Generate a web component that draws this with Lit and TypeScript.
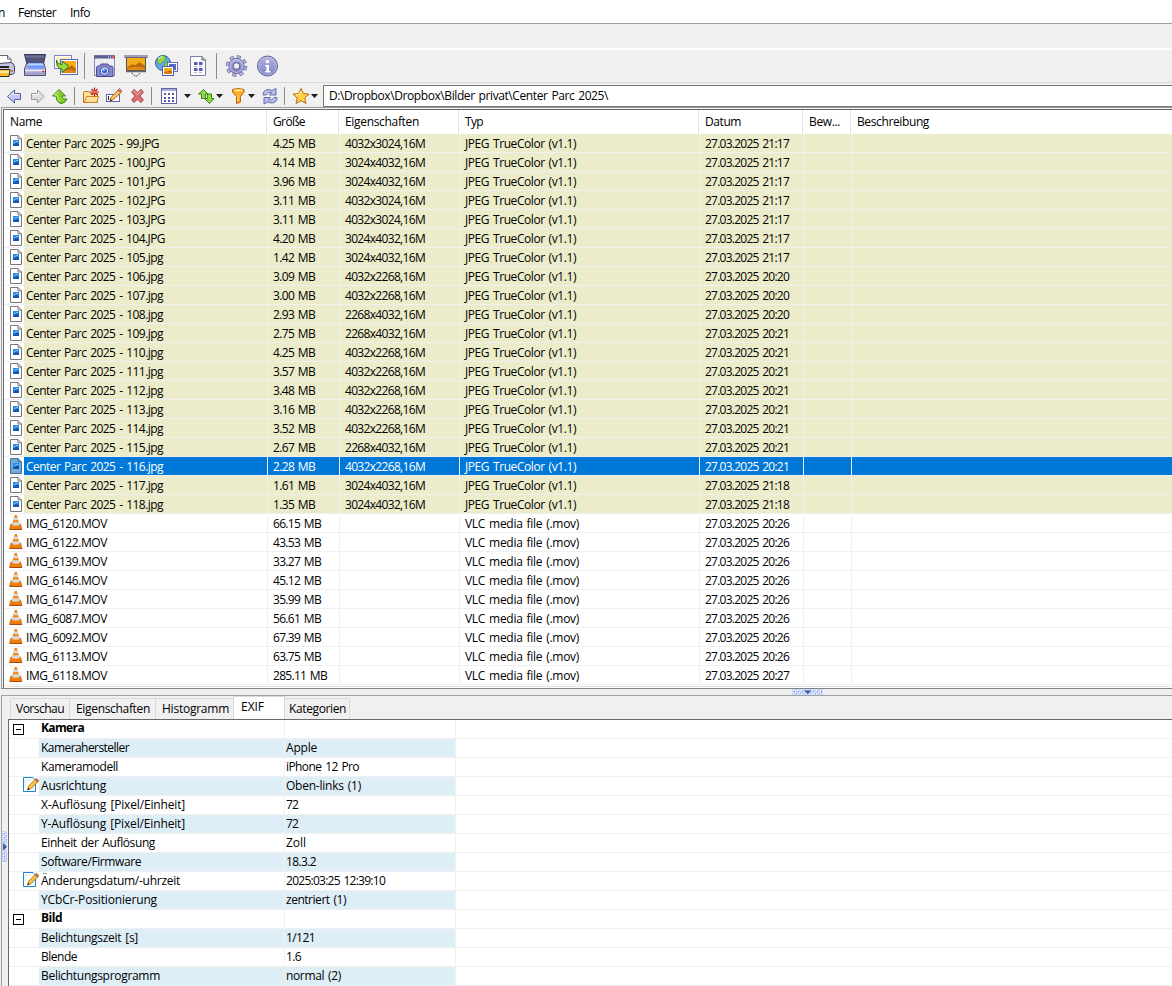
import { LitElement, html, svg, css } from "lit";
import { customElement } from "lit/decorators.js";
import { styleMap } from "lit/directives/style-map.js";

const FAMILY = '"Open Sans", "Noto Sans", sans-serif';
const WORD_GAP = 1.2;
const ctx = document.createElement("canvas").getContext("2d")!;

// Text whose tracking is derived from the width it should occupy.
const fit = (text: string, width: number, bold = false) => {
  ctx.font = `${bold ? 700 : 400} 12px ${FAMILY}`;
  const spaces = text.split(" ").length - 1;
  const gap = (width - ctx.measureText(text).width - spaces * WORD_GAP) / text.length;
  return html`<span style=${styleMap({ letterSpacing: gap.toFixed(3) + "px" })}>${text}</span>`;
};

// [number, extension, size, dimensions, time]
const photos: [number, string, string, string, string][] = [
  [99, "JPG", "4.25", "4032x3024", "21:17"],
  [100, "JPG", "4.14", "3024x4032", "21:17"],
  [101, "JPG", "3.96", "3024x4032", "21:17"],
  [102, "JPG", "3.11", "4032x3024", "21:17"],
  [103, "JPG", "3.11", "4032x3024", "21:17"],
  [104, "JPG", "4.20", "3024x4032", "21:17"],
  [105, "jpg", "1.42", "3024x4032", "21:17"],
  [106, "jpg", "3.09", "4032x2268", "20:20"],
  [107, "jpg", "3.00", "4032x2268", "20:20"],
  [108, "jpg", "2.93", "2268x4032", "20:20"],
  [109, "jpg", "2.75", "2268x4032", "20:21"],
  [110, "jpg", "4.25", "4032x2268", "20:21"],
  [111, "jpg", "3.57", "4032x2268", "20:21"],
  [112, "jpg", "3.48", "4032x2268", "20:21"],
  [113, "jpg", "3.16", "4032x2268", "20:21"],
  [114, "jpg", "3.52", "4032x2268", "20:21"],
  [115, "jpg", "2.67", "2268x4032", "20:21"],
  [116, "jpg", "2.28", "4032x2268", "20:21"],
  [117, "jpg", "1.61", "3024x4032", "21:18"],
  [118, "jpg", "1.35", "3024x4032", "21:18"],
];
const movies: [string, string, string][] = [
  ["6120", "66.15", "20:26"],
  ["6122", "43.53", "20:26"],
  ["6139", "33.27", "20:26"],
  ["6146", "45.12", "20:26"],
  ["6147", "35.99", "20:26"],
  ["6087", "56.61", "20:26"],
  ["6092", "67.39", "20:26"],
  ["6113", "63.75", "20:26"],
  ["6118", "285.11", "20:27"],
];
const SELECTED = 116;

const headers: [string, number][] = [
  ["Name", 32], ["Größe", 32], ["Eigenschaften", 74], ["Typ", 18],
  ["Datum", 36], ["Bew...", 31], ["Beschreibung", 72],
];
const tabs: [string, number][] = [
  ["Vorschau", 48], ["Eigenschaften", 74], ["Histogramm", 67], ["EXIF", 23], ["Kategorien", 57],
];

// kind: g = group heading, e = editable entry, blank = plain entry
const exif: [string, string, number, string, number][] = [
  ["g", "Kamera", 43, "", 0],
  ["", "Kamerahersteller", 88, "Apple", 31],
  ["", "Kameramodell", 77, "iPhone 12 Pro", 73],
  ["e", "Ausrichtung", 65, "Oben-links (1)", 75],
  ["", "X-Auflösung [Pixel/Einheit]", 144, "72", 12],
  ["", "Y-Auflösung [Pixel/Einheit]", 144, "72", 12],
  ["", "Einheit der Auflösung", 114, "Zoll", 20],
  ["", "Software/Firmware", 100, "18.3.2", 30],
  ["e", "Änderungsdatum/-uhrzeit", 139, "2025:03:25 12:39:10", 99],
  ["", "YCbCr-Positionierung", 116, "zentriert (1)", 60],
  ["g", "Bild", 21, "", 0],
  ["", "Belichtungszeit [s]", 97, "1/121", 29],
  ["", "Blende", 36, "1.6", 15],
  ["", "Belichtungsprogramm", 119, "normal (2)", 55],
];

// Each glyph is drawn in toolbar coordinates; [x, width, drawing].
const sep = (x: number, a: number, b: number) => svg`<path d="M${x}.5 ${a}V${b}" stroke="#8c8c8c"/>`;
const caret = (x: number, y = 94) => svg`<path d="M${x} ${y}h7l-3.5 4z" fill="#1a1a1a"/>`;
const hills = (x: number, y: number, w: number, h: number) => svg`
  <rect x=${x} y=${y} width=${w} height=${h} fill="#f3ad17"/>
  <path d="M${x} ${y + h * 0.75}l${w * 0.3} ${-h * 0.22} ${w * 0.13} ${h * 0.08} ${w * 0.27} ${-h * 0.25} ${w * 0.3} ${h * 0.28}v${h * 0.36}H${x}z" fill="#b9680c"/>
  <path d="M${x} ${y + h * 0.82}q${w * 0.5} ${-h * 0.2} ${w} 0v${h * 0.18}H${x}z" fill="#dc8a12"/>`;

const bigIcons: [number, number, unknown][] = [
  [0, 20, svg`
    <path d="M-8 66L-4 55.5H7.5L11 59V66z" fill="#fff" stroke="#66667c"/><path d="M7.5 55.5V59H11" fill="#ddd" stroke="#66667c"/>
    <path d="M-9 66Q-9 64-6 64L11 62.5Q14.5 63.5 14.5 67V72.5Q14 74.5 11 74.5H-9z" fill="#c5c5dd" stroke="#454562"/>
    <path d="M-8 67H9" stroke="#222" stroke-width="2"/><path d="M-2 69.5H10L9 76.5H-2z" fill="#ffb92c" stroke="#292929"/><path d="M-2 72H9" stroke="#ffe79a" stroke-width="2"/>
    <path d="M11 71h2" stroke="#d02020"/>`],
  [20, 30, svg`
    <path d="M24.500 54.500H45.500L43.500 64H27z" fill="#51557a" stroke="#34385b"/><path d="M26 56.500H44" stroke="#6e7296" stroke-width="2"/>
    <path d="M26.500 63.500H44L45.500 69V75.500H24.500V69z" fill="#b8b9d9" stroke="#4b4d79"/><path d="M28 63H43L44 68.500H27z" fill="#6996ff"/><path d="M28 64.500H43" stroke="#b5d7ff" stroke-width="2"/>
    <path d="M25 70.500H45" stroke="#eff0ff"/><path d="M25 73.500H45" stroke="#9a9cc2" stroke-width="2"/><path d="M42 71.500h2.500" stroke="#e22" stroke-width="1.3"/>`],
  [50, 30, svg`
    <rect x="54.500" y="55.500" width="17" height="13" fill="#fff" stroke="#7a86cc"/><rect x="56" y="57" width="14" height="10" fill="#fdeec2"/>
    <rect x="60.500" y="59.500" width="17" height="15" fill="#fff" stroke="#5d69b8"/>${hills(62, 61, 14, 12)}
    <path d="M56.500 60Q57.500 64.500 62 64.500V61L69 66.500 62 72.500V69Q56 68.500 56.500 60z" fill="#9bdc3a" stroke="#2d7612"/>`],
  [80, 10, sep(84, 53, 79)],
  [90, 30, svg`
    <rect x="94.500" y="55.500" width="20" height="20" fill="#eeeef4" stroke="#8a8bb0"/><path d="M94 57H115" stroke="#5e5f91" stroke-width="3"/><path d="M108 57h1m1 0h1" stroke="#fff"/><path d="M112 57h2" stroke="#e55" stroke-width="2"/>
    <path d="M96.500 67.500Q96.500 66 98.500 66L100 66 101 64h7l1 2h2q2 0 2 2v8.500H96.500z" fill="#8687cd" stroke="#484a93"/>
    <circle cx="104.500" cy="71" r="4.300" fill="#d9deff" stroke="#4a4c99"/><circle cx="104.500" cy="71" r="2.500" fill="#3a64d8"/><circle cx="103.800" cy="70" r="1" fill="#8fe8ff"/>`],
  [120, 32, svg`
    <rect x="124.500" y="55" width="23" height="3" fill="#686a85"/><path d="M125 56h22" stroke="#d5d5e2"/><rect x="126" y="58" width="20" height="13" fill="#555"/>${hills(127, 58, 18, 12)}
    <path d="M126 71.500h20" stroke="#666" stroke-width="1.500"/><path d="M131.500 73l4.500 3.500 4.500-3.500" fill="none" stroke="#444" stroke-dasharray="2 1"/>`],
  [152, 32, svg`
    <circle cx="163" cy="63" r="7.500" fill="#64a7ef" stroke="#29619e"/><path d="M157 61q3-6 8-5l1 4-4 2-2 3zM167 61l3 3-4 6-3-3z" fill="#9bd642" stroke="#388630" stroke-width=".5"/><path d="M158 59q2-3 5-2" stroke="#e5faff" fill="none"/>
    <rect x="167.500" y="62.500" width="10" height="9" fill="#fff" stroke="#6470c2"/><rect x="169" y="64" width="7" height="6" fill="#536bc7"/>
    <rect x="162.500" y="66.500" width="11" height="9" fill="#fff" stroke="#4f5eb0"/>${hills(164, 68, 8, 6)}`],
  [184, 28, svg`
    <path d="M190.500 56.500H202L205.500 60V75.500H190.500z" fill="#fafaff" stroke="#8182a2"/><path d="M202 56.500V60h3.500" fill="#bbb" stroke="#666"/>
    <path d="M194 62h3.500v3H194zm5 0h3.500v3H199zM194 68h3.500v3H194zm5 0h3.500v3H199z" fill="#5759b4"/><path d="M194 66.500h3m2 0h3M194 72.500h3m2 0h3" stroke="#aaa" stroke-width=".8"/>`],
  [212, 10, sep(216, 53, 79)],
  [222, 30, svg`
    <circle cx="236.500" cy="66" r="9" fill="none" stroke="#686a9f" stroke-width="3.500" stroke-dasharray="4 3.070"/>
    <circle cx="236.500" cy="66" r="9" fill="none" stroke="#b9bbe2" stroke-width="2.200" stroke-dasharray="2.800 4.270" stroke-dashoffset="-.6"/>
    <circle cx="236.500" cy="66" r="7.700" fill="url(#violet)" stroke="#686aa8" stroke-width=".9"/><circle cx="236.500" cy="66" r="6.500" stroke="#cfd0ee" stroke-width=".7"/><circle cx="236.500" cy="66" r="3.300" fill="#eee" stroke="#686aa8" stroke-width="1.300"/>`],
  [252, 30, svg`
    <circle cx="267.500" cy="66" r="10" fill="url(#violet)" stroke="#5c5e98"/><circle cx="267.500" cy="66" r="8.800" fill="none" stroke="#c9caed" stroke-width=".7"/>
    <circle cx="267.500" cy="61.500" r="1.700" fill="#fff"/><path d="M265 65h4v6h1.500v1.500H265V71h1.500v-4.500H265z" fill="#fff"/>`],
];

const smallIcons: [number, number, unknown][] = [
  [0, 26, svg`<path d="M7.500 96.500L14.500 90V93.500H20.500V99.500H14.500V103z" fill="#c3c8f5" stroke="#565cae"/><path d="M9 96.500l4.500-4V94.500h6" fill="none" stroke="#edf0ff"/>`],
  [26, 23, svg`<path d="M44 96.500L37.500 90V93.500H31.500V99.500H37.500V103z" fill="#dedede" stroke="#999"/><path d="M32.500 94.500H38.500V92.500" fill="none" stroke="#fff"/>`],
  [49, 22, svg`<path d="M59 89.500L65.500 96H62Q62 99.500 67 99Q65 103.500 61 103.500Q56.500 102.500 56 96H52.500z" fill="#84cf28" stroke="#3b7f18"/><path d="M59 91l-4.500 4H57q.5 4.500 3 6" fill="none" stroke="#cdf48c"/>`],
  [71, 8, sep(74, 87, 105)],
  [79, 24, svg`<path d="M83.500 92.500Q83.500 91.500 84.500 91.500H89L90.500 93.500H97.500V102.500H83.500z" fill="#ffe198" stroke="#b87821"/><path d="M84 102.500L86.500 96.500H98.500L97 102.500z" fill="#ffdc92" stroke="#b87821" stroke-width=".8"/><path d="M94.500 87.500v9M90 92h9M91.500 89l6 6M97.500 89l-6 6" stroke="#c51b18" stroke-width="1.200"/><circle cx="94.500" cy="92" r="1.200" fill="#ff9a86"/>`],
  [103, 23, svg`<rect x="106.500" y="94.500" width="13" height="7" fill="#fff" stroke="#6060b0"/><path d="M108.500 96v4" stroke="#222"/><path d="M110 101l1-3.500 7-7.500 3 2.500-7.500 7z" fill="#ffc455" stroke="#8e5113" stroke-width=".8"/><path d="M118 90l1.500-1.500 2.500 2.500-1 1.500z" fill="#e88b8b" stroke="#9f3f3f" stroke-width=".7"/><path d="M110 101l.6-2 1.500 1.200z" fill="#222"/>`],
  [126, 22, svg`<path d="M131.500 92l2.700-2.500 3.300 3.300L140.800 89.500l2.700 2.500-3.500 4 3.500 4-2.700 2.500-3.300-3.300-3.300 3.300-2.700-2.500 3.500-4z" fill="#dd7070" stroke="#a34848"/><path d="M133 92.500l1.200-1.300 3.300 3.300 3.300-3.300" stroke="#f7b0aa" fill="none"/>`],
  [148, 7, sep(151, 87, 105)],
  [155, 26, svg`<rect x="161.500" y="88.500" width="15" height="15" fill="#fff" stroke="#6364a3"/><path d="M162 90h14" stroke="#a9aade" stroke-width="2"/><path d="M164 94h2m2 0h2m2 0h2M164 98h2m2 0h2m2 0h2M164 101h2m2 0h2m2 0h2" stroke="#5557a8" stroke-width="1.800"/>`],
  [181, 13, caret(184)],
  [194, 21, svg`<path d="M203.500 89.500L208 94H205.500V98.500H201.500V94H198.500z" fill="#8fd83d" stroke="#3a8420"/><path d="M209.500 103.500L214 98.500H211.500V94H207.500V98.500H204.500z" fill="#8fd83d" stroke="#3a8420"/>`],
  [215, 12, caret(216)],
  [227, 20, svg`<path d="M232.500 89.500Q238 87.500 244 89.500V92L240.500 96.500V102L236.500 103.500V96.500L232.500 92z" fill="#ffad25" stroke="#bd620c"/><ellipse cx="238.300" cy="90.300" rx="4.500" ry="1.100" fill="#ffe789"/><path d="M237.800 95v6" stroke="#ffdc7b"/>`],
  [247, 12, caret(248)],
  [259, 22, svg`<path d="M263 95Q263 89.500 269 89.500L272 90.500 276 88.500V95H269.500L271.500 92.500Q268 91.500 266 95z" fill="#b9bdec" stroke="#5b60a8" stroke-width=".9"/><path d="M277 97.500Q277 103 271 103L268 102 264 104V97.500H270.500L268.500 100Q272 101 274 97.500z" fill="#b9bdec" stroke="#5b60a8" stroke-width=".9"/>`],
  [281, 8, sep(284, 87, 105)],
  [289, 21, svg`<path d="M301 88.500l2.300 5 5.700.6-4.200 3.800 1.200 5.600-5-2.900-5 2.900 1.200-5.600-4.200-3.800 5.700-.6z" fill="#ffcf3c" stroke="#b87019"/><path d="M301 91l-1.500 3.500-3.500.4" fill="none" stroke="#fff0a1" stroke-width="1.200"/>`],
  [310, 13, caret(311)],
];

const defs = svg`<defs>
  <linearGradient id="violet" x1="0" y1="0" x2="0" y2="1"><stop offset="0" stop-color="#b2b4e1"/><stop offset="1" stop-color="#7f81c2"/></linearGradient></defs>`;

const strip = (icons: [number, number, unknown][], y: number, h: number) =>
  icons.map(([x, w, art]) => html`<svg class="ico" width=${w} height=${h} viewBox="${x} ${y} ${w} ${h}" fill="none">${defs}${art}</svg>`);

const photoIcon = (on: boolean) => html`<svg class="ico" width="20" height="18" viewBox="4 134 20 18" fill="none">
  <path d="M10.500 135.500H18L21.500 139V150.500H10.500z" fill=${on ? "#72add8" : "#fff"} stroke=${on ? "#416e96" : "#777"}/>
  <path d="M18 135.500V139h3.500" stroke=${on ? "#416e96" : "#777"}/>
  <rect x="13" y="140" width="6" height="6" fill="#2b8ae6"/><path d="M13 146v-1.500l2-2 1.500 1 1-1 1.500 1.500v2z" fill=${on ? "#0b4fa9" : "#1554b5"}/><path d="M14 143.500L17 141l1 1" stroke="#70c7fa"/></svg>`;

const cone = () => html`<svg class="ico" width="20" height="18" viewBox="4 515 20 18" fill="none">
  <path d="M11 525h9.500l1.500 5.500H9.500z" fill="#ef7b0b" stroke="#cb5c08" stroke-width=".7"/>
  <path d="M14.800 516h2L20 527q-4 2.200-8.500 0z" fill="#f47e0a"/>
  <path d="M14.100 518.500h3.400l.9 2.800h-5.200zM12.600 523.200h6.400l.8 2.800q-4 1.500-8 0z" fill="#d9d9d9"/>
  <path d="M10 530.500h12" stroke="#a94a09"/></svg>`;

const editIcon = html`<svg class="ico" width="17" height="18" viewBox="22 777 17 18" fill="none">
  <path d="M23.500 777.500H33L35.500 780V791.500H23.500z" fill="#fff" stroke="#1e83d1"/><path d="M25 786v-6h6" stroke="#e2e2e2"/>
  <path d="M27.500 790l1.200-4 6.500-6.500 2.500 2.500-6.500 6.500z" fill="#ffc343" stroke="#8d5a13" stroke-width=".8"/>
  <path d="M35.200 779.500l1.300-1.300 2.400 2.500-1.200 1.300z" fill="#e36a57" stroke="#8d3a23" stroke-width=".6"/><path d="M27.500 790l.6-2 1.500 1.300z" fill="#222"/></svg>`;

const boxIcon = html`<svg class="ico" width="30" height="18" viewBox="9 720 30 18" fill="none"><rect x="13.500" y="724.500" width="10" height="10" fill="#fff" stroke="#000"/><path d="M16 729.500h5" stroke="#000"/></svg>`;

@customElement("app-root")
export class AppRoot extends LitElement {
  static styles = css`
    :host { display: flex; flex-direction: column; width: 1172px; height: 986px; overflow: hidden; background: #f0f0f0; color: #000;
      font: 12px/18px "Open Sans", "Noto Sans", sans-serif; word-spacing: 1.2px; white-space: nowrap; box-sizing: border-box; }
    * { box-sizing: border-box; }
    .ico { display: block; flex: none; }
    .menu { flex: none; height: 24px; background: #fff; border-bottom: 1px solid #a0a0a0; display: flex; padding-top: 4px; }
    .menu div { flex: none; }
    .m0 { width: 18px; display: flex; padding-right: 13px; justify-content: flex-end; overflow: hidden; }
    .m1 { width: 52px; }
    .band { flex: none; height: 26px; border-bottom: 2px solid #fff; }
    .bar { flex: none; display: flex; height: 32px; }
    .bar2 { flex: none; display: flex; height: 25px; border-top: 1px solid #d9d9d9; }
    .path { flex: 1; margin-top: 2px; height: 22px; background: #fff; border: 1px solid #777; border-right: 0; padding: 1px 0 0 5px; }
    .list { flex: none; height: 582px; margin-left: 1px; border: 1px solid #9a9aa0; border-right: 0; border-bottom-color: #828287; padding: 1px 0 0 1px; }
    .inner { height: 100%; border: 2px solid #696969; border-width: 1px 0 0 1px; background: #fff; }
    .head { display: grid; height: 24px; grid-template-columns: 263px 72px 120px 240px 104px 48px 1fr; }
    .head div { border-right: 1px solid #e2e2e2; padding: 3px 0 0 6px; }
    .head div:last-child { border: 0; }
    .row { display: grid; height: 19px; grid-template-columns: 20px 244px 72px 120px 240px 104px 48px 1fr; border-bottom: 1px solid #f0f0f0; }
    .cell { border-right: 1px solid #f0f0f0; padding-left: 5px; height: 18px; line-height: 20px; }
    .cell.name { padding-left: 2px; }
    .cell:last-child { border: 0; }
    .photo .cell { background: #ececca; }
    .row.sel .cell { background: #0078d7; color: #fff; }
    .rest { height: 2px; border-bottom: 1px solid #e3e3e3; }
    .split { flex: none; height: 6px; padding-left: 792px; }
    .lower { flex: 1; min-height: 0; margin-left: 1px; border: 1px solid #a0a0a0; border-width: 1px 0 0 1px; display: flex; }
    .side { flex: none; width: 6px; padding-top: 135px; }
    .pane { flex: 1; display: flex; flex-direction: column; min-width: 0; }
    .tabs { flex: none; height: 23px; display: flex; align-items: flex-end; padding-left: 2px; }
    .tab { height: 21px; border: 1px solid #d9d9d9; border-width: 1px 1px 0 0; padding: 1px 0 0 6px; flex: none; }
    .t0 { width: 60px; border-left-width: 1px; padding-left: 5px; } .t1 { width: 86px; } .t2 { width: 77px; border-right: 0; }
    .t3 { width: 52px; height: 23px; background: #fff; padding-left: 7px; border-left-width: 1px; }
    .t4 { width: 65px; padding-left: 4px; }
    .props { flex: 1; min-height: 0; background: #fff; border: 1px solid #696969; border-width: 1px 0 0 1px; overflow: hidden; }
    .prop { display: grid; grid-template-columns: 30px 246px 171px 1fr; height: 19px; border-bottom: 1px solid #f0f0f0; }
    .prop > div { height: 18px; padding-left: 2px; border-right: 1px solid #f0f0f0; }
    .prop > .value { padding-left: 1px; }
    .prop > .lead, .prop > div:last-child { border: 0; }
    .prop > .lead { padding-left: 13px; }
    .prop > .lead.group { padding-left: 0; }
    .prop.tint > .tone { background: #deeef7; }
    .prop .bold { font-weight: 700; line-height: 16px; }
  `;

  render() {
    const row = (cls: string, icon: unknown, cells: unknown[]) => html`<div class="row ${cls}">${icon}${cells.map(
      (c, i) => html`<div class="cell ${i ? "" : "name"}">${c}</div>`)}</div>`;
    return html`
      <div class="menu"><div class="m0">${fit("n", 7)}</div><div class="m1">${fit("Fenster", 38)}</div><div>${fit("Info", 20)}</div></div>
      <div class="band"></div>
      <div class="bar">${strip(bigIcons, 50, 32)}</div>
      <div class="bar2">${strip(smallIcons, 83, 24)}<div class="path">${fit("D:\\Dropbox\\Dropbox\\Bilder privat\\Center Parc 2025\\", 279)}</div></div>
      <div class="list"><div class="inner">
        <div class="head">${headers.map(([t, w]) => html`<div>${fit(t, w)}</div>`)}</div>
        ${photos.map(([n, ext, size, dim, time]) => row(n === SELECTED ? "photo sel" : "photo", photoIcon(n === SELECTED), [
          fit(`Center Parc 2025 - ${n}.${ext}`, (n < 100 ? 131 : 137) + (ext === "JPG" ? 2 : 0)),
          fit(`${size} MB`, 42), fit(`${dim},16M`, 80), fit("JPEG TrueColor (v1.1)", 111), fit(`27.03.2025 ${time}`, 84), "", ""]))}
        ${movies.map(([n, size, time]) => row("", cone(), [
          fit(`IMG_${n}.MOV`, 81), fit(`${size} MB`, size.length > 5 ? 54 : 48), "", fit("VLC media file (.mov)", 114), fit(`27.03.2025 ${time}`, 84), "", ""]))}
        <div class="rest"></div>
      </div></div>
      <div class="split"><svg class="ico" width="31" height="6" viewBox="0 0 31 6"><rect width="31" height="6" fill="#c7d7fb"/>
        <path d="M1 1.500h10M20 1.500h10M3 3.500h8M22 3.500h8M1 5h10M20 5h10" stroke="#fff" stroke-dasharray="1 3"/><path d="M2 2.500h9M21 2.500h9M4 4.500h7M23 4.500h7" stroke="#8d9bc8" stroke-dasharray="1 3"/><path d="M12 1.500h7.500l-3.700 3.500z" fill="#3f5a99"/></svg></div>
      <div class="lower">
        <div class="side"><svg class="ico" width="5" height="31" viewBox="0 0 5 31"><rect width="5" height="31" fill="#c7d7fb"/>
          <path d="M1.500 1v10M1.500 20v10M3.500 3v8M3.500 22v8" stroke="#fff" stroke-dasharray="1 3"/><path d="M2.500 2v9M2.500 21v9M4.500 4v7M4.500 23v7" stroke="#8d9bc8" stroke-dasharray="1 3"/><path d="M1 12v7.500l4-3.700z" fill="#3f5a99"/></svg></div>
        <div class="pane">
          <div class="tabs">${tabs.map(([t, w], i) => html`<div class="tab t${i}">${fit(t, w)}</div>`)}</div>
          <div class="props">${exif.map(([kind, k, kw, v, vw], i) => html`
            <div class="prop ${i % 2 ? "tint" : ""}"><div class="lead ${kind === "g" ? "group" : ""}">${kind === "g" ? boxIcon : kind === "e" ? editIcon : ""}</div><div class="tone ${kind === "g" ? "bold" : ""}">${fit(k, kw, kind === "g")}</div><div class="tone value">${v ? fit(v, vw) : ""}</div><div></div></div>`)}</div>
        </div>
      </div>`;
  }
}
